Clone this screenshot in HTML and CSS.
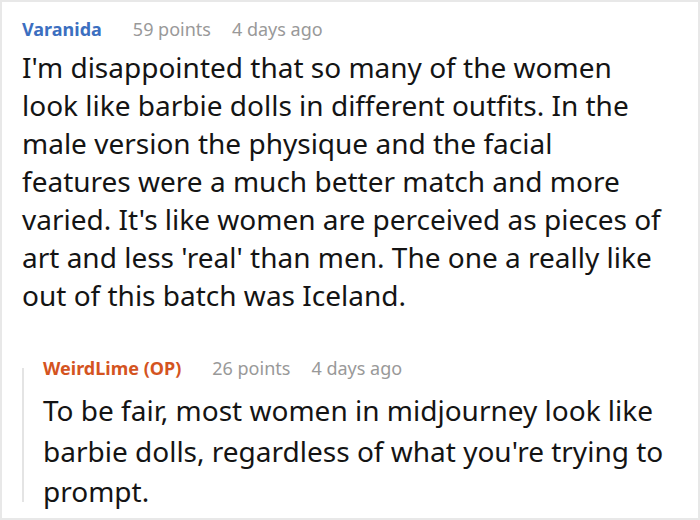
FILE: index.html
```html
<!DOCTYPE html>
<html>
<head>
<meta charset="utf-8">
<link rel="stylesheet" href="styles.css">
</head>
<body>
<div class="frame">
  <div class="comment">
    <div class="meta">
      <span class="author blue">Varanida</span>
      <span class="info">59 points</span>
      <span class="info">4 days ago</span>
    </div>
    <p class="body">I'm disappointed that so many of the women look like barbie dolls in different outfits. In the male version the physique and the facial features were a much better match and more varied. It's like women are perceived as pieces of art and less 'real' than men. The one a really like out of this batch was Iceland.</p>
    <div class="reply">
      <div class="meta">
        <span class="author orange">WeirdLime (OP)</span>
        <span class="info">26 points</span>
        <span class="info">4 days ago</span>
      </div>
      <p class="body reply-body">To be fair, most women in midjourney look like barbie dolls, regardless of what you're trying to prompt.</p>
    </div>
  </div>
</div>
</body>
</html>
```
FILE: styles.css
```css
html, body {
  margin: 0;
  padding: 0;
  background: #fff;
}
.frame {
  width: 700px;
  height: 520px;
  box-sizing: border-box;
  border: 2px solid #e8e8e8;
  overflow: hidden;
  font-family: "Noto Sans", "Open Sans", sans-serif;
}
.comment {
  padding: 15px 30px 0 20px;
}
.meta {
  display: flex;
  font-size: 18px;
  line-height: 24px;
}
.author {
  font-weight: bold;
  margin-right: 31px;
}
.blue { color: #3c6fc0; }
.orange { color: #d4541f; }
.info {
  color: #999;
  margin-right: 21px;
}
.body {
  margin: 7px 0 0 0;
  font-size: 28px;
  line-height: 38px;
  color: #141414;
}
.reply {
  position: relative;
  margin-top: 42px;
  padding-left: 21px;
}
.reply::before {
  content: "";
  position: absolute;
  left: 0;
  top: 12px;
  bottom: 10px;
  width: 2px;
  background: #e4e4e4;
}
.reply-body {
  margin-top: 10px;
  line-height: 40.5px;
}
```
